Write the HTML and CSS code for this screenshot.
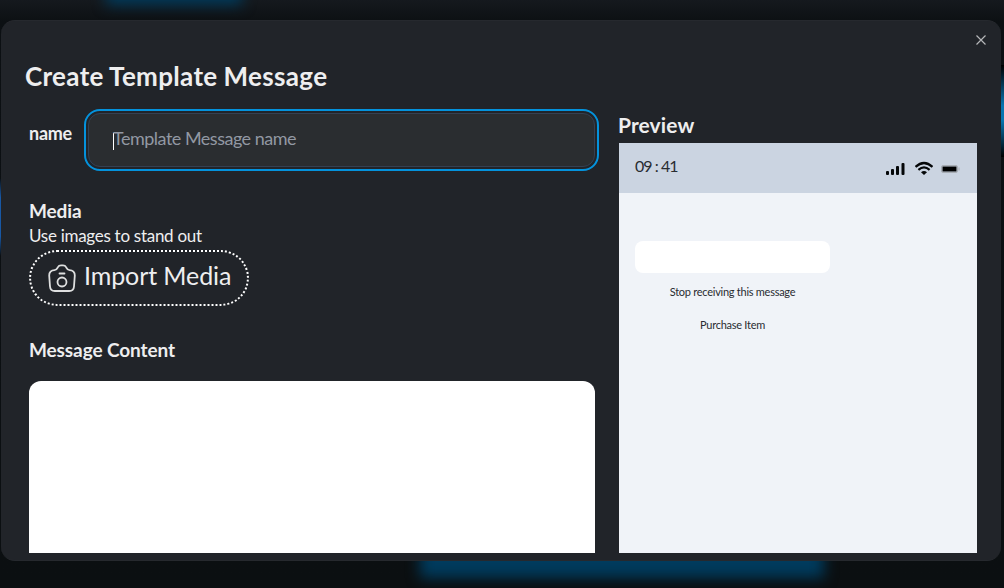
FILE: index.html
```html
<!DOCTYPE html>
<html lang="en">
<head>
<meta charset="utf-8">
<title>Create Template Message</title>
<link rel="stylesheet" href="styles.css">
</head>
<body>
<div class="glow glow-top"></div>
<div class="glow glow-bottom"></div>
<div class="glow glow-right"></div>
<div class="glow glow-left"></div>
<main class="modal">
  <button class="close" aria-label="Close"><svg width="12" height="12" viewBox="0 0 12 12"><path d="M1.5 1.5l9 9M10.500 1.5l-9 9"/></svg></button>
  <h1 class="title"><span>Create Template Message</span></h1>
  <div class="columns">
    <section class="form">
      <div class="name-row">
        <label class="name-label">name</label>
        <div class="field"><span class="caret"></span><span class="placeholder">Template Message name</span></div>
      </div>
      <h2 class="heading media-heading"><span>Media</span></h2>
      <p class="hint"><span>Use images to stand out</span></p>
      <button class="import">
        <svg class="camera" width="28" height="30" viewBox="0 0 28 30"><path d="M6.500 7.200C8.800 7.200 9 5.900 9.900 4.200C10.500 3 11.600 2.300 13 2.300h2c1.400 0 2.500.7 3.100 1.900C19 5.900 19.200 7.200 21.500 7.200C24.800 7.200 27 9.500 26.800 12.500L26 23.500C25.800 26.300 24.800 28 21.200 28H6.800C3.200 28 2.200 26.300 2 23.500L1.200 12.500C1 9.500 3.200 7.200 6.500 7.200Z"/><path d="M11.500 10.500h5"/><circle cx="14" cy="19" r="4.500"/></svg>
        <span class="import-text">Import Media</span>
      </button>
      <h2 class="heading content-heading"><span>Message Content</span></h2>
      <div class="editor"></div>
    </section>
    <section class="preview">
      <h2 class="preview-title"><span>Preview</span></h2>
      <div class="phone">
        <div class="status">
          <span class="time">09 : 41</span>
          <svg class="signals" width="76" height="16" viewBox="0 0 76 16"><g fill="#050708"><rect x="1" y="10" width="3" height="4" rx="1"/><rect x="6" y="8" width="3" height="6" rx="1"/><rect x="11" y="5" width="3" height="9" rx="1"/><rect x="16.500" y="2" width="3" height="12" rx="1"/></g><g fill="none" stroke="#050708" stroke-width="2.200"><path d="M30.500 5.900Q39 -1.900 47.500 5.900"/><path d="M33.400 8.800Q39 4 44.600 8.800"/></g><path d="M36 11.300Q39 8.900 42 11.300L39 14Z" fill="#050708"/><rect x="56.500" y="4.500" width="16" height="7" rx="1.500" fill="none" stroke="#a8adb4"/><rect x="57.500" y="5.500" width="14" height="5" fill="#000"/><path d="M74 6.500v3" stroke="#a8adb4"/></svg>
        </div>
        <div class="messages">
          <div class="bubble"></div>
          <p class="reply stop">Stop receiving this message</p>
          <p class="reply purchase">Purchase Item</p>
        </div>
      </div>
    </section>
  </div>
</main>
</body>
</html>
```
FILE: styles.css
```css
* { box-sizing: border-box; }
body {
  margin: 0;
  height: 588px;
  padding: 20px 3px 27px 1px;
  overflow: hidden;
  position: relative;
  background: linear-gradient(180deg, #15191e 0, #0c1013 22px, #0b0f11 100%);
  font-family: Lato, "Liberation Sans", sans-serif;
  color: #eeeeef;
}
h1, h2, p { margin: 0; white-space: nowrap; }
button { font: inherit; color: inherit; background: none; border: 0; padding: 0; }
.glow { position: absolute; }
.glow-top { left: 106px; top: -20px; width: 136px; height: 25px; background: #003a5b; filter: blur(7px); }
.glow-bottom { left: 420px; top: 545px; width: 404px; height: 33px; background: #003b5d; filter: blur(7px); }
.glow-right { right: 0; top: 65px; width: 3px; height: 92px; background: linear-gradient(#000, #0875b0 44%, #0875b0 60%, #000); }
.glow-left { left: 0; top: 178px; width: 1px; height: 78px; background: linear-gradient(#0b0f11, #1858a5 25%, #1858a5 75%, #0b0f11); }
.modal {
  position: relative;
  height: 541px;
  padding: 41px 23px 7px 24px;
  background: #212429;
  border: 1px solid #26292e;
  border-width: 1px 0;
  border-radius: 14px;
  overflow: hidden;
}
.close { position: absolute; right: 14px; top: 13px; width: 12px; height: 12px; display: flex; }
.close path { fill: none; stroke: #b5b7b9; stroke-width: 1.200; }
.title { height: 28px; font-size: 26px; line-height: 28px; font-weight: 700; letter-spacing: 0.32px; word-spacing: -0.5px; }
.columns { display: grid; grid-template-columns: 570px 358px; gap: 24px; }
.form { padding: 23px 0 0 4px; }
.name-row { display: flex; height: 54px; }
.name-label { width: 59px; padding-top: 9px; font-size: 18px; line-height: 22px; font-weight: 700; letter-spacing: -0.25px; }
.field {
  flex: 1;
  display: flex;
  align-items: center;
  padding: 0 0 0 24px;
  background: #2a2d30;
  border: 1px solid #344052;
  border-radius: 12px;
  outline: 2px solid #0492dc;
  outline-offset: 2px;
}
.caret { width: 1px; height: 17px; margin-top: 2px; background: #fff; }
.placeholder { margin: -4px 0 0 -1px; color: #9298a3; font-size: 18px; line-height: 20px; letter-spacing: -0.5px; }
.heading { font-size: 19px; line-height: 24px; font-weight: 700; letter-spacing: -0.1px; }
.media-heading { margin-top: 32px; }
.hint { font-size: 17px; line-height: 24px; padding-top: 1px; height: 27px; letter-spacing: -0.28px; }
.import {
  display: flex;
  align-items: center;
  gap: 8px;
  width: 220px;
  height: 56px;
  padding: 0 0 0 17px;
  border: 2px dotted #fff;
  border-radius: 28px;
}
.camera { fill: none; stroke: #dedfdf; stroke-width: 1.800; stroke-linecap: round; flex: none; }
.import-text { font-size: 25px; line-height: 28px; margin-top: -7px; white-space: nowrap; letter-spacing: -0.1px; }
.content-heading { margin-top: 32px; }
.editor { height: 172px; margin-top: 19px; background: #fff; border-radius: 12px 12px 0 0; }
.preview { padding-top: 22px; }
.preview-title { height: 31px; margin-left: -1px; font-size: 21px; line-height: 26px; font-weight: 700; letter-spacing: 0.1px; }
.phone { height: 410px; background: #f0f3f8; color: #292c31; }
.status { display: flex; justify-content: space-between; height: 50px; padding: 12px 16px 0 16px; background: #cbd4e1; }
.time { font-size: 16px; line-height: 22px; letter-spacing: -0.95px; }
.signals { margin-top: 6px; }
.messages { width: 195px; margin: 48px 0 0 16px; }
.bubble { height: 32px; background: #fff; border-radius: 8px; }
.reply { font-size: 11px; line-height: 16px; text-align: center; letter-spacing: -0.26px; }
.stop { margin-top: 11px; }
.purchase { margin-top: 17px; }
```
